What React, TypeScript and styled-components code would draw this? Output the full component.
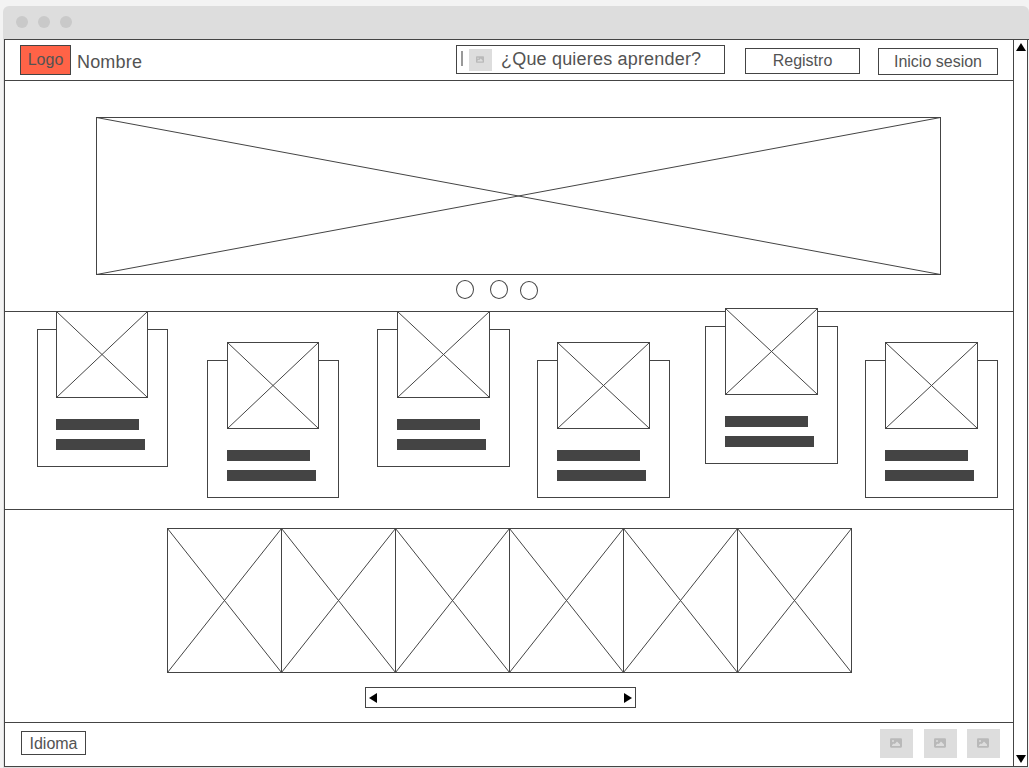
import React from "react";
import styled, { createGlobalStyle } from "styled-components";

const LINE = "#444444";

const GlobalStyle = createGlobalStyle`
  *, *::before, *::after { box-sizing: border-box; }
  html, body { margin: 0; padding: 0; }
  body {
    width: 1029px;
    height: 768px;
    overflow: hidden;
    background: #f3f3f3;
    color: #535353;
    font-family: "Liberation Sans", Arial, sans-serif;
  }
  svg { display: block; }
`;

const Window = styled.div`
  width: 1029px;
  height: 768px;
  padding: 6px 0 0 3px;
  overflow: hidden;
`;

const TitleBar = styled.div`
  display: flex;
  align-items: center;
  gap: 10px;
  height: 33px;
  padding: 0 0 1px 13px;
  background: #dddddd;
  border-radius: 6px 6px 0 0;
`;

const WindowDot = styled.span`
  width: 12px;
  height: 12px;
  border-radius: 50%;
  background: #c9c9c9;
`;

const Viewport = styled.div`
  display: flex;
  width: 1026px;
  height: 729px;
  padding-left: 1px;
  background: #dfdfe0;
`;

const Page = styled.main`
  display: flex;
  flex-direction: column;
  width: 1010px;
  height: 728px;
  border: 1px solid ${LINE};
  background: #fff;
`;

const ScrollBar = styled.div`
  display: flex;
  flex-direction: column;
  justify-content: space-between;
  align-items: center;
  width: 14px;
  height: 728px;
  padding: 3px 0;
  border: solid ${LINE};
  border-width: 1px 1px 1px 0;
  background: #fff;
`;

const Edge = styled.div`
  width: 1px;
  height: 728px;
  border-top: 1px solid ${LINE};
  background: #f3f3f3;
`;

const Header = styled.header`
  display: flex;
  align-items: flex-start;
  height: 41px;
  padding: 5px 15px 0;
  border-bottom: 1px solid ${LINE};
`;

const Logo = styled.div`
  width: 51px;
  height: 30px;
  border: 1px solid ${LINE};
  background: #ff6347;
  font-size: 16px;
  line-height: 28px;
  text-align: center;
`;

const BrandName = styled.div`
  width: 379px;
  padding: 7px 0 0 6px;
  font-size: 18px;
  line-height: 20px;
  letter-spacing: 0.18px;
  margin-right: 6px;
`;

const SearchField = styled.div`
  display: flex;
  width: 269px;
  height: 29px;
  padding: 3px 0 0 4px;
  border: 1px solid ${LINE};
  font-size: 18px;
  line-height: 21px;
  letter-spacing: 0.19px;
  white-space: nowrap;
`;

const Caret = styled.span`
  width: 2px;
  height: 15px;
  margin: 2px 6px 0 0;
  background: #999999;
`;

const SearchText = styled.span`
  margin-left: 9px;
`;

const Button = styled.div<{ $w: number; $h: number; $ml?: number }>`
  flex: none;
  width: ${(p) => p.$w}px;
  height: ${(p) => p.$h}px;
  margin: 3px 0 0 ${(p) => p.$ml ?? 0}px;
  border: 1px solid ${LINE};
  font-size: 16px;
  line-height: ${(p) => p.$h - 2}px;
  text-align: center;
`;

const Hero = styled.section`
  height: 231px;
  padding: 36px 0 0 91px;
  border-bottom: 1px solid ${LINE};
`;

const Pager = styled.div`
  display: flex;
  padding: 5px 0 0 360px;
`;

const PagerDot = styled.span<{ $gap: number; $drop?: number }>`
  width: 18px;
  height: 19px;
  margin: ${(p) => p.$drop ?? 0}px ${(p) => p.$gap}px 0 0;
  border: 1px solid ${LINE};
  border-radius: 50%;
`;

const Cards = styled.section`
  display: flex;
  align-items: flex-start;
  height: 198px;
  border-bottom: 1px solid ${LINE};
`;

const Card = styled.article<{ $w: number; $ml: number; $top: number; $pad: number }>`
  flex: none;
  width: ${(p) => p.$w}px;
  height: 138px;
  margin: ${(p) => p.$top}px 0 0 ${(p) => p.$ml}px;
  padding-left: ${(p) => p.$pad}px;
  border: 1px solid ${LINE};
`;

const CardImage = styled.div`
  margin: -19px 0 21px;
`;

const TextBar = styled.div<{ $w: number }>`
  width: ${(p) => p.$w}px;
  height: 11px;
  margin-bottom: 9px;
  background: ${LINE};
`;

const Gallery = styled.section`
  height: 213px;
  padding: 18px 0 0 162px;
  border-bottom: 1px solid ${LINE};
`;

const GalleryRow = styled.div`
  display: flex;
  > * + * { margin-left: -1px; }
`;

const GalleryScroll = styled.div`
  display: flex;
  align-items: center;
  justify-content: space-between;
  width: 271px;
  height: 21px;
  margin: 14px 0 0 198px;
  padding: 0 3px;
  border: 1px solid ${LINE};
`;

const Footer = styled.footer`
  display: flex;
  align-items: flex-start;
  padding: 6px 0 0 16px;
`;

const Language = styled.div`
  width: 65px;
  height: 24px;
  margin: 2px 794px 0 0;
  border: 1px solid ${LINE};
  font-size: 16px;
  line-height: 24px;
  text-align: center;
`;

const Thumb = styled.div<{ $w: number; $h: number; $mr?: number }>`
  display: flex;
  flex: none;
  align-items: center;
  justify-content: center;
  width: ${(p) => p.$w}px;
  height: ${(p) => p.$h}px;
  margin-right: ${(p) => p.$mr ?? 0}px;
  padding: 0 1px 1px 0;
  background: #dddddd;
`;

function CrossBox({ w, h }: { w: number; h: number }) {
  return (
    <svg width={w} height={h} viewBox={`0 0 ${w} ${h}`} fill="none" stroke={LINE}>
      <rect x=".5" y=".5" width={w - 1} height={h - 1} fill="#fff" />
      <path d={`M.5 .5L${w - 0.5} ${h - 0.5}M${w - 0.5} .5L.5 ${h - 0.5}`} />
    </svg>
  );
}

function PictureIcon({ w, h }: { w: number; h: number }) {
  return (
    <svg width={w} height={h} viewBox="0 0 12 10">
      <rect y=".3" width="12" height="9.4" rx="1.1" fill="#b9b9b9" />
      <circle cx="3" cy="3.1" r="1" fill="#dddddd" />
      <path d="M2 8V6.9L3.8 5.4L4.8 6.1L7 3.4L10 6.4V8Z" fill="#dddddd" />
    </svg>
  );
}

function Arrow({ w, h, points }: { w: number; h: number; points: string }) {
  return (
    <svg width={w} height={h} viewBox={`0 0 ${w} ${h}`}>
      <polygon points={points} fill="#000" />
    </svg>
  );
}

const cards = [
  { w: 131, ml: 32, top: 17, pad: 18, img: 92 },
  { w: 132, ml: 39, top: 48, pad: 19, img: 92 },
  { w: 133, ml: 38, top: 17, pad: 19, img: 93 },
  { w: 133, ml: 27, top: 48, pad: 19, img: 93 },
  { w: 133, ml: 35, top: 14, pad: 19, img: 93 },
  { w: 133, ml: 27, top: 48, pad: 19, img: 93 },
];

export default function App() {
  return (
    <>
      <GlobalStyle />
      <Window>
        <TitleBar>
          <WindowDot />
          <WindowDot />
          <WindowDot />
        </TitleBar>
        <Viewport>
          <Page>
            <Header>
              <Logo>Logo</Logo>
              <BrandName>Nombre</BrandName>
              <SearchField>
                <Caret />
                <Thumb $w={23} $h={22}>
                  <PictureIcon w={8} h={7} />
                </Thumb>
                <SearchText>¿Que quieres aprender?</SearchText>
              </SearchField>
              <Button $w={115} $h={26} $ml={20}>Registro</Button>
              <Button $w={120} $h={27} $ml={18}>Inicio sesion</Button>
            </Header>
            <Hero>
              <CrossBox w={845} h={158} />
              <Pager>
                <PagerDot $gap={16} />
                <PagerDot $gap={12} />
                <PagerDot $gap={0} $drop={1} />
              </Pager>
            </Hero>
            <Cards>
              {cards.map((c, i) => (
                <Card key={i} $w={c.w} $ml={c.ml} $top={c.top} $pad={c.pad}>
                  <CardImage>
                    <CrossBox w={c.img} h={87} />
                  </CardImage>
                  <TextBar $w={83} />
                  <TextBar $w={89} />
                </Card>
              ))}
            </Cards>
            <Gallery>
              <GalleryRow>
                {[0, 1, 2, 3, 4, 5].map((i) => (
                  <CrossBox key={i} w={115} h={145} />
                ))}
              </GalleryRow>
              <GalleryScroll>
                <Arrow w={8} h={10} points="0,5 8,0 8,10" />
                <Arrow w={8} h={10} points="8,5 0,0 0,10" />
              </GalleryScroll>
            </Gallery>
            <Footer>
              <Language>Idioma</Language>
              <Thumb $w={33} $h={29} $mr={11}><PictureIcon w={12} h={10} /></Thumb>
              <Thumb $w={33} $h={29} $mr={10}><PictureIcon w={12} h={10} /></Thumb>
              <Thumb $w={33} $h={29}><PictureIcon w={12} h={10} /></Thumb>
            </Footer>
          </Page>
          <ScrollBar>
            <Arrow w={10} h={8} points="5,0 10,8 0,8" />
            <Arrow w={10} h={8} points="0,0 10,0 5,8" />
          </ScrollBar>
          <Edge />
        </Viewport>
      </Window>
    </>
  );
}
